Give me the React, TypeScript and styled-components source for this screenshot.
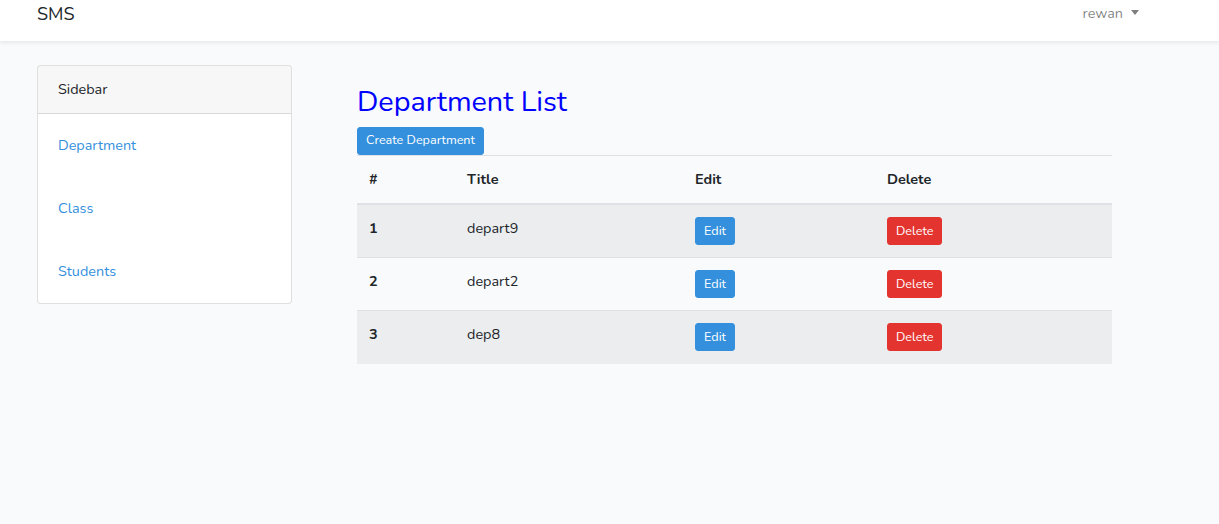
import React from 'react'
import styled, { createGlobalStyle } from 'styled-components'

const GlobalStyle = createGlobalStyle`
  html, body {
    margin: 0;
    padding: 0;
    background: #f8fafc;
    font-family: Nunito, Lato, 'Open Sans', sans-serif;
    font-size: 14.4px;
    line-height: 1.6;
    color: #212529;
  }
  * {
    box-sizing: border-box;
  }
`

const Navbar = styled.nav`
  height: 41px;
  background: #fff;
  box-shadow: 0 2px 4px rgba(0, 0, 0, 0.075);
  display: flex;
  align-items: center;
  justify-content: space-between;
  padding: 0 80px 13px 37px;
`
const Brand = styled.a`
  font-size: 18px;
  color: #212529;
  text-decoration: none;
`
const UserToggle = styled.a`
  display: flex;
  align-items: center;
  gap: 8px;
  color: rgba(0, 0, 0, 0.5);
  font-size: 14.4px;
  text-decoration: none;
  &::after {
    content: '';
    border-top: 5px solid rgba(0, 0, 0, 0.5);
    border-left: 4.5px solid transparent;
    border-right: 4.5px solid transparent;
    margin-top: -2px;
  }
`

const Layout = styled.div`
  display: flex;
  align-items: flex-start;
  padding: 24px 0 0 37px;
  gap: 65px;
`

const Card = styled.div`
  width: 255px;
  background: #fff;
  border: 1px solid rgba(0, 0, 0, 0.125);
  border-radius: 4px;
  overflow: hidden;
`
const CardHeader = styled.div`
  height: 48px;
  display: flex;
  align-items: center;
  padding: 0 20px;
  background: rgba(0, 0, 0, 0.03);
  border-bottom: 1px solid rgba(0, 0, 0, 0.125);
`
const NavList = styled.ul`
  list-style: none;
  margin: 0;
  padding: 0;
`
const NavItem = styled.li`
  height: 63px;
  display: flex;
  align-items: center;
  padding: 0 20px;
`
const NavLink = styled.a`
  color: #3490dc;
  text-decoration: none;
`

const Main = styled.main`
  width: 755px;
  padding-top: 20px;
`
const Title = styled.h2`
  margin: 0 0 7px;
  font-size: 28.8px;
  font-weight: 400;
  line-height: 1.2;
  color: #0000ff;
`
const Button = styled.button<{ variant?: 'primary' | 'danger' }>`
  height: 28px;
  border: 1px solid ${p => (p.variant === 'danger' ? '#e3342f' : '#3490dc')};
  background: ${p => (p.variant === 'danger' ? '#e3342f' : '#3490dc')};
  color: #fff;
  font-family: inherit;
  font-size: 12.6px;
  line-height: 1.5;
  padding: 0 8px;
  border-radius: 3px;
  cursor: pointer;
`
const Table = styled.table`
  width: 100%;
  border-collapse: collapse;
  tbody tr:nth-of-type(odd) {
    background: rgba(0, 0, 0, 0.05);
  }
`
const Th = styled.th<{ w?: number }>`
  text-align: left;
  font-weight: 700;
  padding: 12px;
  height: 49px;
  width: ${p => (p.w ? `${p.w}px` : 'auto')};
  border-top: 1px solid #dee2e6;
  border-bottom: 2px solid #dee2e6;
  vertical-align: middle;
`
const Td = styled.td<{ bold?: boolean }>`
  padding: 12px;
  height: 53px;
  font-weight: ${p => (p.bold ? 700 : 400)};
  border-top: 1px solid #dee2e6;
  vertical-align: top;
`

const departments = [
  { id: 1, title: 'depart9' },
  { id: 2, title: 'depart2' },
  { id: 3, title: 'dep8' },
]

const App: React.FC = () => {
  return (
    <>
      <GlobalStyle />
      <Navbar>
        <Brand href="#">SMS</Brand>
        <UserToggle href="#">rewan</UserToggle>
      </Navbar>
      <Layout>
        <Card>
          <CardHeader>Sidebar</CardHeader>
          <NavList>
            <NavItem>
              <NavLink href="#">Department</NavLink>
            </NavItem>
            <NavItem>
              <NavLink href="#">Class</NavLink>
            </NavItem>
            <NavItem>
              <NavLink href="#">Students</NavLink>
            </NavItem>
          </NavList>
        </Card>
        <Main>
          <Title>Department List</Title>
          <Button>Create Department</Button>
          <Table>
            <thead>
              <tr>
                <Th w={98}>#</Th>
                <Th w={228}>Title</Th>
                <Th w={192}>Edit</Th>
                <Th>Delete</Th>
              </tr>
            </thead>
            <tbody>
              {departments.map(d => (
                <tr key={d.id}>
                  <Td bold>{d.id}</Td>
                  <Td>{d.title}</Td>
                  <Td>
                    <Button>Edit</Button>
                  </Td>
                  <Td>
                    <Button variant="danger">Delete</Button>
                  </Td>
                </tr>
              ))}
            </tbody>
          </Table>
        </Main>
      </Layout>
    </>
  )
}

export default App
